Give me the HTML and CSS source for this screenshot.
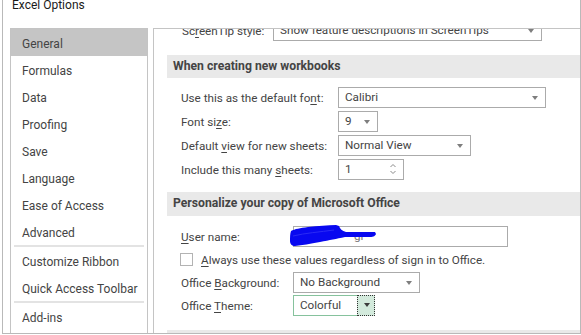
FILE: index.html
```html
<!DOCTYPE html>
<html lang="en">
<head>
    <meta charset="UTF-8">
    <title>Excel Options</title>
    <link rel="stylesheet" href="styles.css">
</head>
<body>
    <div class="window">
        <div class="title"><span>Excel Options</span></div>
        <div class="main">
            <ul class="nav">
                <li class="active">General</li>
                <li>Formulas</li>
                <li>Data</li>
                <li>Proofing</li>
                <li>Save</li>
                <li>Language</li>
                <li>Ease of Access</li>
                <li>Advanced</li>
                <li class="sep"></li>
                <li>Customize Ribbon</li>
                <li>Quick Access Toolbar</li>
                <li class="sep"></li>
                <li>Add-ins</li>
            </ul>

            <div class="panel">
                <div class="scroll">
                    <div class="top-row">
                        <span class="lbl">Sc<u>r</u>eenTip style:</span>
                        <div class="select tip">Show feature descriptions in ScreenTips<span class="arrow"></span></div>
                    </div>

                    <h2 class="head">When creating new workbooks</h2>
                    <div class="group new-book">
                        <div class="row">
                            <span class="lbl">Use this as the default fo<u>n</u>t:</span>
                            <div class="select font">Calibri<span class="arrow"></span></div>
                        </div>
                        <div class="row">
                            <span class="lbl">Font si<u>z</u>e:</span>
                            <div class="select size">9<span class="arrow"></span></div>
                        </div>
                        <div class="row">
                            <span class="lbl">Default <u>v</u>iew for new sheets:</span>
                            <div class="select view">Normal View<span class="arrow"></span></div>
                        </div>
                        <div class="row">
                            <span class="lbl">Include this many <u>s</u>heets:</span>
                            <div class="select spin">1
                                <svg class="spin-arrows" width="6" height="12" viewBox="0 0 6 12">
                                    <path d="M0.5 4 L3 1.5 L5.5 4" fill="none" stroke="#8a8a8a" stroke-width="1"/>
                                    <path d="M0.5 8 L3 10.5 L5.5 8" fill="none" stroke="#8a8a8a" stroke-width="1"/>
                                </svg>
                            </div>
                        </div>
                    </div>

                    <h2 class="head">Personalize your copy of Microsoft Office</h2>
                    <div class="group personal">
                        <div class="row">
                            <span class="lbl"><u>U</u>ser name:</span>
                            <div class="input user">
                                <span class="ghost">gi</span>
                                <svg class="scribble" width="88" height="24" viewBox="0 0 88 24">
                                    <path d="M1 7 C 5 5, 10 4, 18 3 C 28 2, 38 1, 46 1 L 49 2 C 50 5, 52 7, 56 8 C 66 8, 76 8, 85 8 L 86 10 C 85 12, 84 13, 80 13 C 70 13, 62 13, 55 13 C 46 15, 40 16, 30 18 C 20 20, 12 21, 5 22 C 2 22, 0 20, 0 17 C 0 13, 0 10, 1 7 Z" fill="#0808f0"/>
                                    <path d="M3 12 C 15 9, 30 8, 44 6" fill="none" stroke="#2a2af5" stroke-width="1"/>
                                </svg>
                            </div>
                        </div>
                        <div class="row check-row">
                            <span class="box"></span>
                            <span class="check-text"><u>A</u>lways use these values regardless of sign in to Office.</span>
                        </div>
                        <div class="row">
                            <span class="lbl">Office <u>B</u>ackground:</span>
                            <div class="select background">No Background<span class="arrow"></span></div>
                        </div>
                        <div class="row">
                            <span class="lbl">Office <u>T</u>heme:</span>
                            <div class="select theme">Colorful<span class="btn"><span class="arrow dark"></span></span></div>
                        </div>
                    </div>

                    <h2 class="head"></h2>
                </div>
            </div>
        </div>
    </div>
</body>
</html>
```

FILE: styles.css
```css
body {
    margin: 0;
    background-color: #fff;
    font-family: Roboto, "Noto Sans", sans-serif;
    font-size: 12px;
    color: #444;
    overflow: hidden;
}

.window {
    margin-left: 2px;
    width: 577px;
    height: 333px;
    border: 1px solid #b9b9b9;
    border-top: none;
    display: flex;
    flex-direction: column;
}

.title {
    height: 28px;
    padding-left: 9px;
    flex-shrink: 0;
    color: #1a1a1a;
}

.title span {
    display: block;
    line-height: 14px;
    margin-top: -2px;
}

.main {
    display: flex;
    flex: 1;
    min-height: 0;
}

/* left list */
.nav {
    list-style: none;
    margin: 0 5px 0 7px;
    padding: 0;
    width: 136px;
    border: 1px solid #c4c4c4;
    border-bottom: none;
}

.nav li {
    height: 27px;
    line-height: 30px;
    padding-left: 11px;
    white-space: nowrap;
    overflow: hidden;
}

.nav li.active {
    background-color: #c5c5c5;
}

.nav li.sep {
    height: 2px;
    margin: 0 3px;
    background-color: #e3e3e3;
}

/* right panel */
.panel {
    flex: 1;
    border-left: 1px solid #c4c4c4;
    border-top: 1px solid #c4c4c4;
    overflow: hidden;
    font-size: 11.7px;
}

.scroll {
    margin-top: -9px;
    padding-left: 13px;
}

.head {
    margin: 0;
    height: 23px;
    line-height: 23px;
    padding-left: 6px;
    background-color: #e9e9e9;
    font-size: 12.2px;
    font-weight: bold;
    color: #444;
}

.personal + .head,
.new-book + .head {
    height: 24px;
}

.top-row {
    display: flex;
    align-items: center;
    height: 21px;
    padding-left: 15px;
    margin-bottom: 14px;
}

.top-row .lbl {
    width: 91px;
}

.group {
    display: flex;
    flex-direction: column;
    padding-left: 14px;
}

.new-book {
    gap: 3px;
    padding-top: 9px;
    padding-bottom: 12px;
}

.new-book .lbl {
    width: 157px;
}

.personal {
    gap: 2px;
    padding-top: 10px;
    padding-bottom: 14px;
}

.personal .lbl {
    width: 112px;
}

.row {
    display: flex;
    align-items: center;
    height: 21px;
}

.lbl {
    white-space: nowrap;
    flex-shrink: 0;
}

u {
    text-underline-offset: 2px;
}

.select,
.input {
    position: relative;
    box-sizing: border-box;
    height: 21px;
    line-height: 19px;
    padding-left: 6px;
    border: 1px solid #ababab;
    background-color: #fff;
    white-space: nowrap;
}

.arrow {
    position: absolute;
    right: 7px;
    top: 8px;
    width: 0;
    height: 0;
    border-left: 3.5px solid transparent;
    border-right: 3.5px solid transparent;
    border-top: 4px solid #7e7e7e;
}

.tip { width: 269px; }
.font { width: 208px; }
.size { width: 40px; }
.view { width: 133px; }
.background { width: 127px; }

.spin {
    width: 66px;
}

.spin-arrows {
    position: absolute;
    right: 7px;
    top: 3px;
}

.user {
    width: 215px;
}

.ghost {
    position: absolute;
    left: 60px;
    top: 0;
    color: #777;
}

.scribble {
    position: absolute;
    left: -4px;
    top: -3px;
}

.box {
    box-sizing: border-box;
    width: 13px;
    height: 13px;
    margin-left: -1px;
    border: 1px solid #b3b3b3;
    background-color: #fff;
}

.check-text {
    margin-left: 8px;
    white-space: nowrap;
}

.theme {
    width: 82px;
    border-color: #86c29d;
}

.theme .btn {
    position: absolute;
    right: -1px;
    top: -1px;
    box-sizing: border-box;
    width: 18px;
    height: 21px;
    border: 1px dotted #333;
    background-color: #d3eadc;
}

.theme .arrow {
    right: 4px;
    top: 7px;
}

.arrow.dark {
    border-top-color: #3c3c3c;
}
```
